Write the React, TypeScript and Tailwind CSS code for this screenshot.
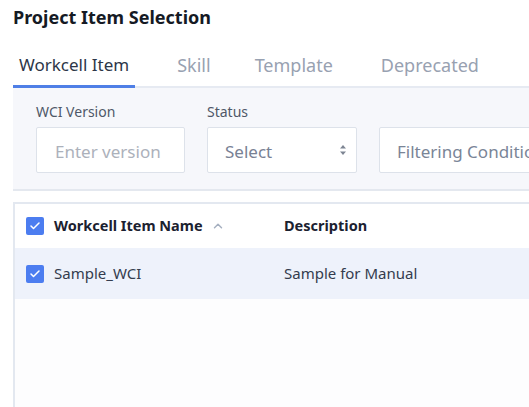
import { Check, ChevronUp } from "lucide-react";

const font = { fontFamily: '"Source Sans Pro", "Noto Sans", "Open Sans", sans-serif' };

function Box() {
  return (
    <span className="flex h-[18px] w-[18px] items-center justify-center rounded-[2px] bg-[#4c7df0]">
      <Check className="h-3 w-3 text-white" strokeWidth={3} />
    </span>
  );
}

export default function App() {
  return (
    <div className="h-[407px] w-[529px] overflow-hidden bg-white pl-[13px]" style={font}>
      <h1 className="pt-[4px] text-[18px] font-bold leading-[26px] text-[#151a24]">Project Item Selection</h1>

      <div className="mt-[24px] flex border-b-2 border-[#e6eaf2] text-[18px] leading-[22px] text-[#98a1b1]">
        <div className="-mb-[2px] border-b-[3px] border-[#4f7fe6] px-[6px] pb-[9px] text-[17px] text-[#2d3648]">
          Workcell Item
        </div>
        <div className="ml-[42px] pb-[9px]">Skill</div>
        <div className="ml-[44px] pb-[9px]">Template</div>
        <div className="ml-[48px] pb-[9px]">Deprecated</div>
      </div>

      <div className="flex gap-[22px] border-b-2 border-[#e4e8ef] bg-[#f6f7fb] px-[23px] pb-[16px] pt-[13px]">
        <div className="flex flex-col">
          <span className="text-[14px] leading-[22px] text-[#4f5868]">WCI Version</span>
          <div className="mt-[4px] flex h-[46px] w-[149px] items-center rounded-[2px] border border-[#dde2ea] bg-white px-[18px] pt-[3px] text-[17px] text-[#acb1bb]">
            Enter version
          </div>
        </div>
        <div className="flex flex-col">
          <span className="text-[14px] leading-[22px] text-[#4f5868]">Status</span>
          <div className="mt-[4px] flex h-[46px] w-[150px] items-center justify-between rounded-[2px] border border-[#dde2ea] bg-white pl-[17px] pr-[9px] pt-[3px] text-[17px] text-[#788194]">
            Select
            <svg width="8" height="12" viewBox="0 0 8 12" className="-mt-[3px] fill-[#7d8593]">
              <path d="M4 1 L7 4.5 L1 4.5 Z" />
              <path d="M4 11 L7 7.5 L1 7.5 Z" />
            </svg>
          </div>
        </div>
        <div className="flex min-w-0 flex-col">
          <span className="text-[14px] leading-[22px] text-transparent">.</span>
          <div className="mt-[4px] flex h-[46px] w-[200px] items-center overflow-hidden whitespace-nowrap rounded-[2px] border border-[#dde2ea] bg-white pl-[17px] pt-[3px] text-[17px] text-[#7a8597]">
            Filtering Conditions
          </div>
        </div>
      </div>

      <div className="mt-[11px] h-[300px] border-l-2 border-t-2 border-[#e3e8f0] bg-[#fdfdfe]">
        <div className="flex h-[44px] items-center bg-white text-[14.5px] font-bold text-[#1b2130]">
          <div className="flex w-[269px] items-center gap-[10px] pl-[11px]">
            <Box />
            <span>Workcell Item Name</span>
            <ChevronUp className="-ml-[2px] h-[14px] w-[14px] text-[#a6b0c0]" strokeWidth={2.5} />
          </div>
          <span>Description</span>
        </div>
        <div className="flex h-[51px] items-center bg-[#eef2fb] text-[15px] text-[#343c4e]">
          <div className="flex w-[269px] items-center gap-[10px] pl-[11px]">
            <Box />
            <span>Sample_WCI</span>
          </div>
          <span>Sample for Manual</span>
        </div>
      </div>
    </div>
  );
}
